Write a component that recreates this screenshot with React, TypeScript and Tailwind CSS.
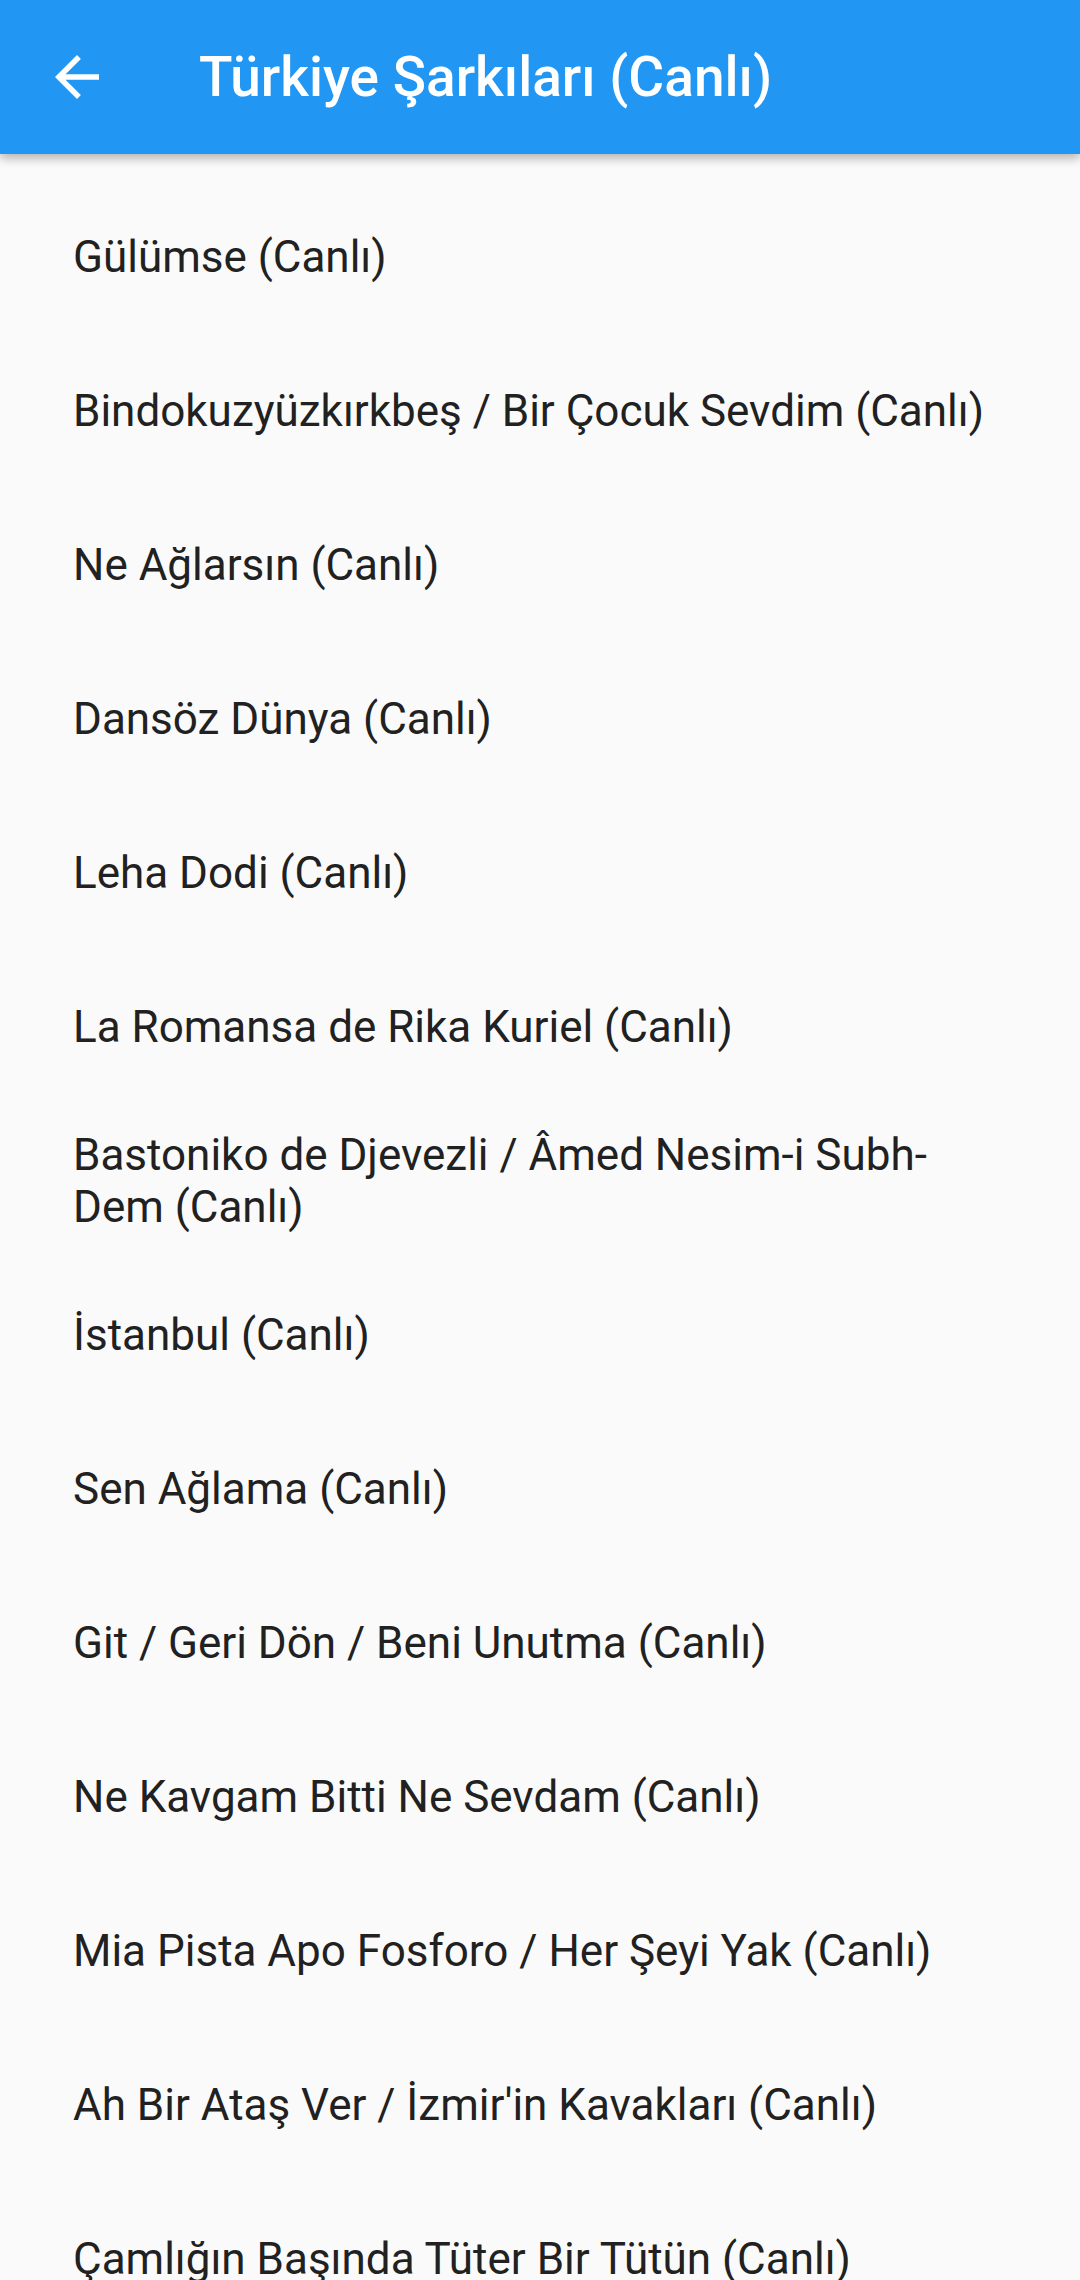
const songs = [
  "Gülümse (Canlı)",
  "Bindokuzyüzkırkbeş / Bir Çocuk Sevdim (Canlı)",
  "Ne Ağlarsın (Canlı)",
  "Dansöz Dünya (Canlı)",
  "Leha Dodi (Canlı)",
  "La Romansa de Rika Kuriel (Canlı)",
  "Bastoniko de Djevezli / Âmed Nesim-i Subh-Dem (Canlı)",
  "İstanbul (Canlı)",
  "Sen Ağlama (Canlı)",
  "Git / Geri Dön / Beni Unutma (Canlı)",
  "Ne Kavgam Bitti Ne Sevdam (Canlı)",
  "Mia Pista Apo Fosforo / Her Şeyi Yak (Canlı)",
  "Ah Bir Ataş Ver / İzmir'in Kavakları (Canlı)",
  "Çamlığın Başında Tüter Bir Tütün (Canlı)",
];

export default function App() {
  return (
    <div className="w-[1080px] h-[2280px] overflow-hidden bg-[#fafafa] font-['Roboto',sans-serif]">
      <header className="relative z-10 flex h-[154px] items-center bg-[#2196f3] shadow-[0_4px_10px_rgba(0,0,0,0.3)]">
        <div className="flex w-[154px] justify-center">
          <svg viewBox="0 0 24 24" className="h-[66px] w-[66px] fill-white">
            <path d="M20 11H7.83l5.59-5.59L12 4l-8 8 8 8 1.41-1.41L7.83 13H20v-2z" />
          </svg>
        </div>
        <h1 className="ml-[45px] text-[55px] font-medium text-white">
          Türkiye Şarkıları (Canlı)
        </h1>
      </header>
      <ul className="pt-[26px]">
        {songs.map((song) => (
          <li
            key={song}
            className="flex h-[154px] items-center px-[73px] text-[44px] leading-[52px] text-[#212121]"
          >
            {song}
          </li>
        ))}
      </ul>
    </div>
  );
}
